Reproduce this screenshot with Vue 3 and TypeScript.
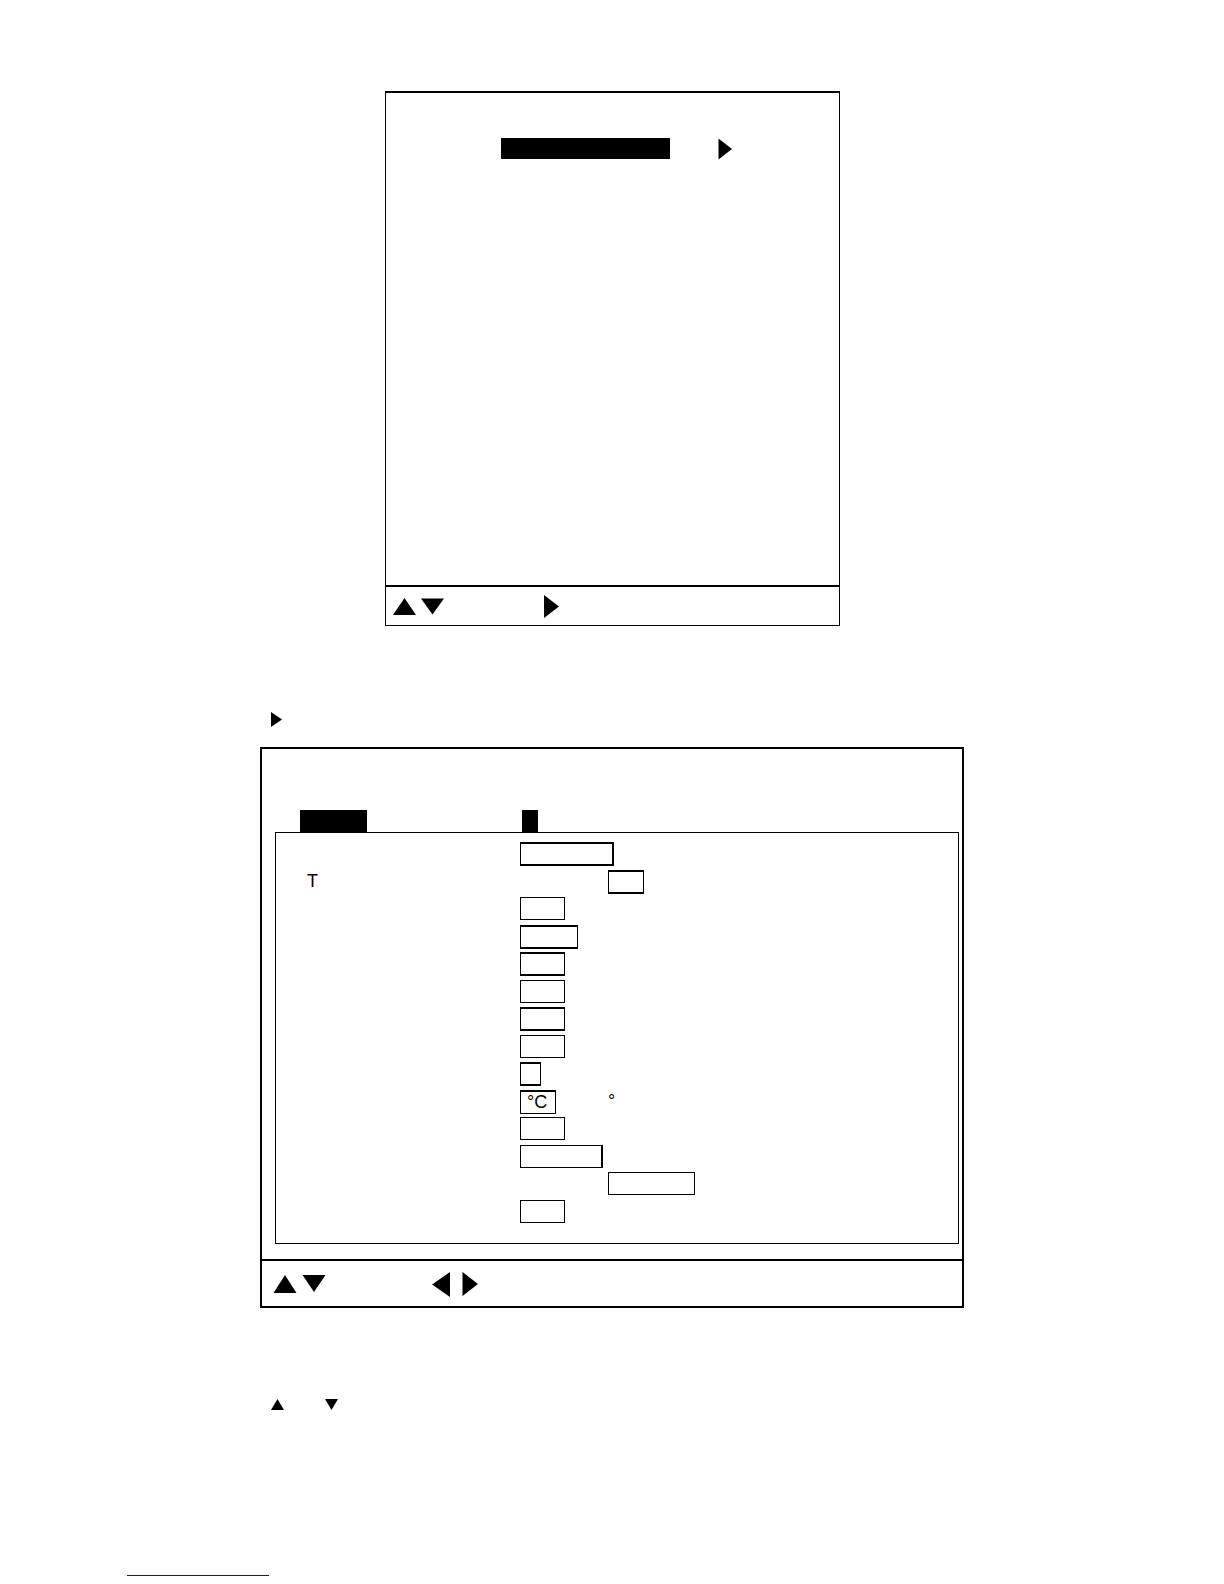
<script setup lang="ts">
interface Field {
  name: string
  label?: string
  size: string
  second?: boolean
  value?: string
  other?: string
  edge?: string
}

const fields: Field[] = [
  { name: 'field-1', size: 'w94', edge: 'heavy heavy-right' },
  { name: 'field-2', label: 'T', size: 'w36', second: true, edge: 'heavy' },
  { name: 'field-3', size: 'w45' },
  { name: 'field-4', size: 'w58', edge: 'heavy' },
  { name: 'field-5', size: 'w45', edge: 'heavy' },
  { name: 'field-6', size: 'w45' },
  { name: 'field-7', size: 'w45', edge: 'heavy' },
  { name: 'field-8', size: 'w45' },
  { name: 'field-9', size: 'w21', edge: 'heavy' },
  { name: 'field-10', size: 'w36', value: '°C', other: '°', edge: 'heavy-top' },
  { name: 'field-11', size: 'w45' },
  { name: 'field-12', size: 'w83', edge: 'heavy-right' },
  { name: 'field-13', size: 'w87', second: true },
  { name: 'field-14', size: 'w45' },
]
</script>

<template>
  <main class="page">
    <div class="menu-grid">
      <section class="menu">
        <div class="menu-body">
          <div class="menu-row">
            <button class="selected menu-item" type="button" aria-label="Selected menu item"></button>
            <svg width="14" height="22" viewBox="0 0 14 22"><path d="M0.5 0.5L14 11L0.5 21.5Z" /></svg>
          </div>
        </div>
        <footer class="menu-keys">
          <svg width="23" height="17" viewBox="0 0 23 17"><path d="M11.5 0L23 17H0Z" /></svg>
          <svg class="next" width="23" height="17" viewBox="0 0 23 17"><path d="M0 0.5H23L11.5 16.5Z" /></svg>
          <svg class="far" width="15" height="23" viewBox="0 0 15 23"><path d="M0 0L15 11.5L0 23Z" /></svg>
        </footer>
      </section>
    </div>

    <div class="setup-grid">
      <p class="hint open-hint">
        <svg width="11" height="15" viewBox="0 0 11 15"><path d="M0 0L11 7.5L0 15Z" /></svg>
      </p>

      <section class="setup">
        <div class="setup-body">
          <nav class="tabs">
            <button class="selected tab" type="button" aria-label="Selected page"></button>
            <button class="selected tab-number" type="button" aria-label="Page number"></button>
          </nav>
          <form class="fields" @submit.prevent>
            <div v-for="field in fields" :key="field.name" class="row">
              <label class="name" :for="field.name">{{ field.label }}</label>
              <input
                :id="field.name"
                type="text"
                :class="[field.size, field.edge, { second: field.second }]"
                :value="field.value"
                :aria-label="field.label ? undefined : field.name"
              />
              <span v-if="field.other" class="second">{{ field.other }}</span>
            </div>
          </form>
        </div>
        <footer class="setup-keys">
          <svg width="24" height="18" viewBox="0 0 24 18"><path d="M12 0L23.5 18H0.5Z" /></svg>
          <svg class="next" width="24" height="18" viewBox="0 0 24 18"><path d="M0.5 0H23.5L12 17Z" /></svg>
          <svg class="far" width="18" height="25" viewBox="0 0 18 25"><path d="M18 0V25L0 12.5Z" /></svg>
          <svg class="last" width="16" height="25" viewBox="0 0 16 25"><path d="M0.5 0L16 12L0.5 24Z" /></svg>
        </footer>
      </section>

      <p class="hint move-hint">
        <svg width="13" height="11" viewBox="0 0 13 11"><path d="M6.5 0L13 11H0Z" /></svg>
        <svg width="13" height="11" viewBox="0 0 13 11"><path d="M0 0H13L6.5 11Z" /></svg>
      </p>
    </div>

    <div class="link-grid">
      <a class="page-link" href="#" aria-label="Back to top"></a>
    </div>
  </main>
</template>

<style>
body {
  margin: 0;
  background: #fff;
}
</style>

<style scoped>
* {
  box-sizing: border-box;
}

.page {
  padding: 91px 0 8px;
  color: #000;
  font: 18px/22px "Liberation Sans", Arial, sans-serif;
}

svg {
  display: block;
  flex: none;
}

button {
  padding: 0;
  border: 0;
  border-radius: 0;
}

.selected {
  background: #000;
}

/* Menu screen */
.menu-grid {
  display: grid;
  grid-template-columns: 385fr 455fr 384fr;
}

.menu {
  grid-column: 2;
  border: 1px solid #000;
  border-top-width: 2px;
}

.menu-body {
  min-height: 494px;
  padding: 45px 0 0 115px;
  border-bottom: 2px solid #000;
}

.menu-row {
  display: flex;
  gap: 48px;
}

.menu-item {
  width: 169px;
  height: 21px;
}

.menu-keys {
  display: flex;
  align-items: center;
  height: 38px;
  padding: 1px 0 0 7px;
}

.menu-keys .next {
  margin-left: 5px;
}

.menu-keys .far {
  margin-left: 100px;
}

/* Setup screen */
.setup-grid {
  display: grid;
  grid-template-columns: 260fr 704fr 260fr;
}

.setup-grid > * {
  grid-column: 2;
}

.hint {
  display: flex;
  margin: 0;
  padding-left: 11px;
}

.open-hint {
  margin: 86px 0 20px;
}

.setup {
  border: 2px solid #000;
}

.setup-body {
  padding: 61px 3px 15px 13px;
  border-bottom: 2px solid #000;
}

.tabs {
  display: flex;
  gap: 155px;
  padding-left: 25px;
}

.tab {
  width: 67px;
  height: 22px;
}

.tab-number {
  width: 16px;
  height: 22px;
}

.fields {
  padding: 9px 0 16px;
  border: 1px solid #000;
}

.row {
  display: grid;
  grid-template-columns: 244px 88px 1fr;
  align-items: start;
  height: 27px;
}

.row:nth-child(odd) {
  height: 28px;
}

.name {
  padding-left: 31px;
}

.second {
  grid-column: 3;
}

input {
  height: 23px;
  margin: 0;
  padding: 0 0 1px 6px;
  border: 1px solid #000;
  border-radius: 0;
  background: #fff;
  color: inherit;
  font: inherit;
}

.heavy {
  height: 24px;
  border-top-width: 2px;
  border-bottom-width: 2px;
}

.heavy-top {
  height: 24px;
  border-top-width: 2px;
}

.heavy-right {
  border-right-width: 2px;
}

.w21 { width: 21px; }
.w36 { width: 36px; }
.w45 { width: 45px; }
.w58 { width: 58px; }
.w83 { width: 83px; }
.w87 { width: 87px; }
.w94 { width: 94px; }

.setup-keys {
  display: flex;
  align-items: center;
  height: 45px;
  padding: 1px 0 0 11px;
}

.setup-keys .next {
  margin-left: 5px;
}

.setup-keys .far {
  margin-left: 106px;
}

.setup-keys .last {
  margin-left: 12px;
}

.move-hint {
  gap: 41px;
  margin-top: 91px;
}

.link-grid {
  display: grid;
  grid-template-columns: 127fr 142fr 955fr;
  margin-top: 141px;
}

.page-link {
  grid-column: 2;
  height: 25px;
  border-bottom: 1px solid #10108c;
}
</style>
